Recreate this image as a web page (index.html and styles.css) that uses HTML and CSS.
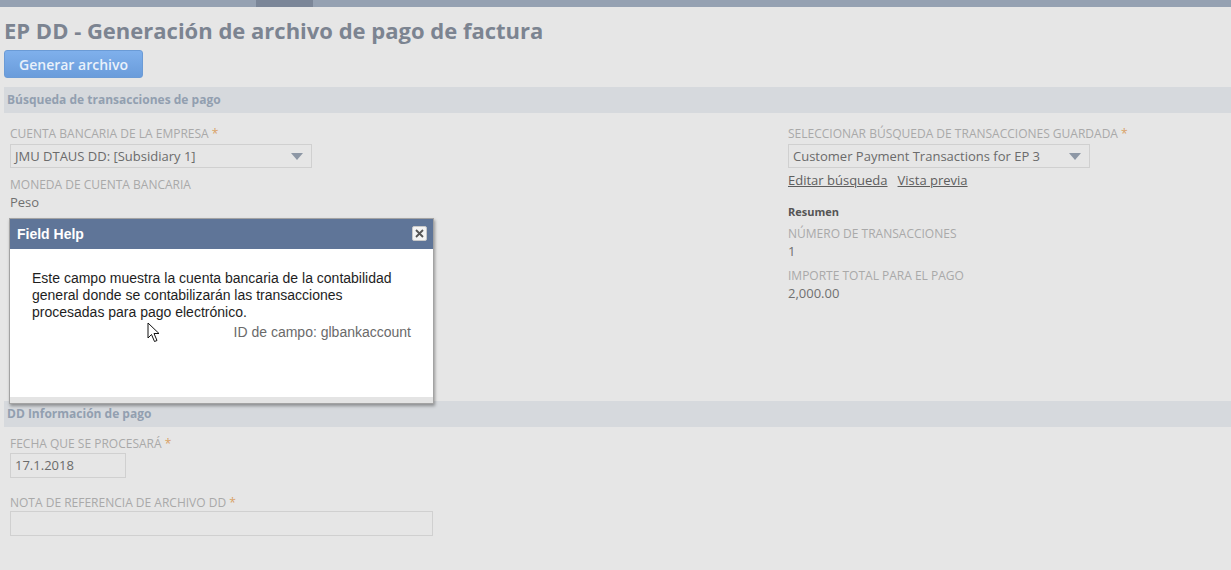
FILE: index.html
```
<!DOCTYPE html>
<html lang="es">
<head>
    <meta charset="UTF-8">
    <title>EP DD - Generación de archivo de pago de factura</title>
    <link rel="stylesheet" href="styles.css">
</head>
<body>
    <div class="topbar"><div class="topbar-tab"></div></div>

    <div class="page">
        <h1 class="title">EP DD - Generación de archivo de pago de factura</h1>
        <button class="btn-primary">Generar archivo</button>

        <div class="section-head">Búsqueda de transacciones de pago</div>

        <div class="form-cols">
            <div class="col">
                <div class="label">Cuenta bancaria de la empresa <span class="req">*</span></div>
                <div class="select select-wide">
                    <span>JMU DTAUS DD: [Subsidiary 1]</span>
                    <svg class="caret" width="12" height="7" viewBox="0 0 12 7"><path d="M0 0 H12 L6 7 Z" fill="#8d97a5"/></svg>
                </div>
                <div class="label label-gap">Moneda de cuenta bancaria</div>
                <div class="value">Peso</div>
            </div>
            <div class="col">
                <div class="label">Seleccionar búsqueda de transacciones guardada <span class="req">*</span></div>
                <div class="select select-wide">
                    <span>Customer Payment Transactions for EP 3</span>
                    <svg class="caret" width="12" height="7" viewBox="0 0 12 7"><path d="M0 0 H12 L6 7 Z" fill="#8d97a5"/></svg>
                </div>
                <div class="links">
                    <a href="#">Editar búsqueda</a>
                    <a href="#">Vista previa</a>
                </div>
                <div class="summary-title">Resumen</div>
                <div class="label label-sum">Número de transacciones</div>
                <div class="value">1</div>
                <div class="label label-sum2">Importe total para el pago</div>
                <div class="value">2,000.00</div>
            </div>
        </div>

        <div class="section-head section-two">DD Información de pago</div>

        <div class="form-single">
            <div class="label label-first">Fecha que se procesará <span class="req">*</span></div>
            <div class="input input-date">17.1.2018</div>
            <div class="label label-note">Nota de referencia de archivo DD <span class="req">*</span></div>
            <div class="input input-note"></div>
        </div>
    </div>

    <div class="help-popup">
        <div class="help-head">
            <span>Field Help</span>
            <div class="help-close">
                <svg width="9" height="9" viewBox="0 0 9 9"><path d="M1 1 L8 8 M8 1 L1 8" stroke="#555" stroke-width="1.8"/></svg>
            </div>
        </div>
        <div class="help-body">
            <p class="help-text">Este campo muestra la cuenta bancaria de la contabilidad general donde se contabilizarán las transacciones procesadas para pago electrónico.</p>
            <p class="help-id">ID de campo: glbankaccount</p>
        </div>
        <div class="help-foot"></div>
    </div>

    <svg class="cursor" width="14" height="21" viewBox="0 0 14 21">
        <path d="M1 1 L1 16 L4.5 12.5 L7.5 19.5 L10 18.5 L7 11.5 L12 11.5 Z" fill="#fff" stroke="#111" stroke-width="1" stroke-linejoin="round"/>
    </svg>
</body>
</html>
```

FILE: styles.css
```
body {
    margin: 0;
    padding: 0;
    background-color: #e6e6e6;
    font-family: "Open Sans", Arial, sans-serif;
    color: #6a6a6a;
}

.topbar {
    height: 7px;
    background-color: #95a1b2;
}

.topbar-tab {
    margin-left: 256px;
    width: 57px;
    height: 7px;
    background-color: #7b8698;
}

.page {
    padding-left: 4px;
}

.title {
    margin: 9px 0 0;
    font-size: 22px;
    line-height: 28px;
    font-weight: 700;
    color: #7c8491;
}

.btn-primary {
    display: block;
    margin-top: 6px;
    width: 139px;
    height: 28px;
    padding: 0;
    border: 1px solid #6b9bd6;
    border-radius: 3px;
    background: linear-gradient(#7fb0ec, #6a9cdb);
    color: #e9f1fb;
    font-family: "Open Sans", Arial, sans-serif;
    font-size: 14px;
    font-weight: 600;
}

.section-head {
    margin-top: 9px;
    height: 26px;
    line-height: 26px;
    padding-left: 3px;
    background-color: #d6d9dd;
    color: #929fb0;
    font-size: 12px;
    font-weight: 700;
}

.form-cols {
    display: grid;
    grid-template-columns: 778px 1fr;
    padding-left: 6px;
}

.label {
    margin-top: 13px;
    font-size: 12px;
    line-height: 16px;
    text-transform: uppercase;
    color: #a9a9a9;
}

.req {
    color: #d9a266;
}

.label-gap {
    margin-top: 9px;
}

.label-sum {
    margin-top: 7px;
}

.label-sum2 {
    margin-top: 8px;
}

.value {
    font-size: 13px;
    line-height: 18px;
    color: #707070;
}

.select {
    margin-top: 2px;
    height: 22px;
    border: 1px solid #d0d0d0;
    display: flex;
    align-items: center;
    justify-content: space-between;
    padding: 0 8px 0 4px;
    font-size: 13px;
    color: #6b6b6b;
}

.select-wide {
    width: 288px;
}

.links {
    margin-top: 4px;
    display: flex;
    gap: 10px;
    font-size: 13px;
    line-height: 16px;
}

.links a {
    color: #5e5e5e;
}

.summary-title {
    margin-top: 17px;
    font-size: 11px;
    line-height: 14px;
    font-weight: 700;
    color: #555;
}

.section-two {
    margin-top: 99px;
}

.form-single {
    padding-left: 6px;
}

.label-first {
    margin-top: 9px;
}

.label-note {
    margin-top: 17px;
}

.input {
    margin-top: 1px;
    height: 23px;
    border: 1px solid #d0d0d0;
    padding-left: 4px;
    font-size: 13px;
    line-height: 23px;
    color: #6b6b6b;
}

.input-date {
    width: 110px;
}

.input-note {
    margin-top: 0;
    width: 417px;
}

.help-popup {
    position: absolute;
    left: 9px;
    top: 218px;
    width: 423px;
    border: 1px solid #a3a3a3;
    box-shadow: 1px 2px 3px rgba(0, 0, 0, 0.35);
    background-color: #fff;
    font-family: "Liberation Sans", Arial, sans-serif;
}

.help-head {
    height: 30px;
    background-color: #5f7598;
    display: flex;
    align-items: center;
    justify-content: space-between;
    padding: 0 6px 0 7px;
    color: #fff;
    font-size: 14px;
    font-weight: 700;
}

.help-close {
    width: 13px;
    height: 13px;
    border: 1px solid #c8c8c8;
    border-radius: 2px;
    background-color: #f4f4f4;
    display: flex;
    align-items: center;
    justify-content: center;
    margin-top: -2px;
}

.help-body {
    height: 148px;
    padding: 21px 22px 0 22px;
    box-sizing: border-box;
}

.help-text {
    margin: 0;
    max-width: 380px;
    font-size: 14px;
    line-height: 17px;
    color: #1e1e1e;
}

.help-id {
    margin: 3px 0 0;
    text-align: right;
    font-size: 14px;
    line-height: 17px;
    color: #6a6a6a;
}

.help-foot {
    height: 6px;
    background-color: #e4e4e4;
}

.cursor {
    position: absolute;
    left: 147px;
    top: 322px;
}
```
